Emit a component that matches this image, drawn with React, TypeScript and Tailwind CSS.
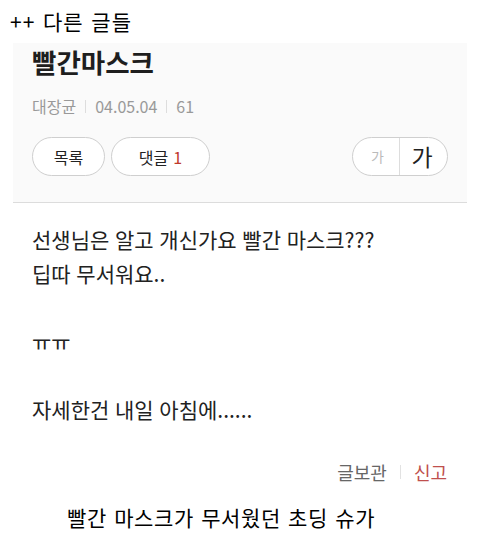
import React from "react";

const font = { fontFamily: '"Noto Sans CJK KR", "Noto Sans", sans-serif' };

export default function App() {
  return (
    <div
      className="h-[535px] w-[480px] overflow-hidden bg-white text-[#222]"
      style={font}
    >
      <div className="flex h-[43px] items-center pt-[1px] pl-[10px] text-[21px] tracking-[1px] text-black [word-spacing:2px]">
        ++ 다른 글들
      </div>

      <div className="mx-[13px] h-[160px] border-b border-[#dcdcdc] bg-[#fafafa] px-[19px]">
        <h1 className="pt-[3px] text-[26.5px] font-bold leading-[32px] text-[#1e1e1e]">
          빨간마스크
        </h1>
        <div className="mt-[18px] flex items-center text-[16px] leading-[20px] text-[#999]">
          <span>대장균</span>
          <span className="mx-[9px] h-[13px] w-px bg-[#ddd]" />
          <span>04.05.04</span>
          <span className="mx-[9px] h-[13px] w-px bg-[#ddd]" />
          <span>61</span>
        </div>
        <div className="mt-[21px] flex items-center">
          <button
            type="button"
            className="flex h-[39px] w-[73px] items-center justify-center rounded-full border border-[#cfcfcf] bg-white text-[16px] text-[#222]"
          >
            목록
          </button>
          <button
            type="button"
            className="ml-[6px] flex h-[39px] w-[99px] items-center justify-center gap-[5px] rounded-full border border-[#cfcfcf] bg-white text-[16px] text-[#222]"
          >
            댓글 <span className="text-[#c0392b]">1</span>
          </button>
          <div className="ml-auto flex h-[39px] w-[96px] items-center overflow-hidden rounded-full border border-[#cfcfcf] bg-white">
            <span className="flex h-full w-[47px] items-center justify-center border-r border-[#ddd] pl-[3px] text-[14px] text-[#bbb]">
              가
            </span>
            <span className="flex h-full flex-1 items-center justify-center pr-[3px] text-[23px] text-[#222]">
              가
            </span>
          </div>
        </div>
      </div>

      <div className="mt-[19px] pl-[32px] text-[21px] leading-[34px] text-[#222] [word-spacing:1px]">
        <p>선생님은 알고 개신가요 빨간 마스크???</p>
        <p>딥따 무서워요..</p>
        <p>&nbsp;</p>
        <p>ㅠㅠ</p>
        <p>&nbsp;</p>
        <p>자세한건 내일 아침에......</p>
      </div>

      <div className="mt-[34px] flex items-center justify-end pr-[33px] text-[18px] leading-[24px]">
        <span className="text-[#666]">글보관</span>
        <span className="mx-[13px] h-[14px] w-px bg-[#e2e2e2]" />
        <span className="text-[#c0504d]">신고</span>
      </div>

      <div className="mt-[19px] pl-[67px] text-[21px] leading-[28px] tracking-[0.6px] text-black [word-spacing:2px]">
        빨간 마스크가 무서웠던 초딩 슈가
      </div>
    </div>
  );
}
